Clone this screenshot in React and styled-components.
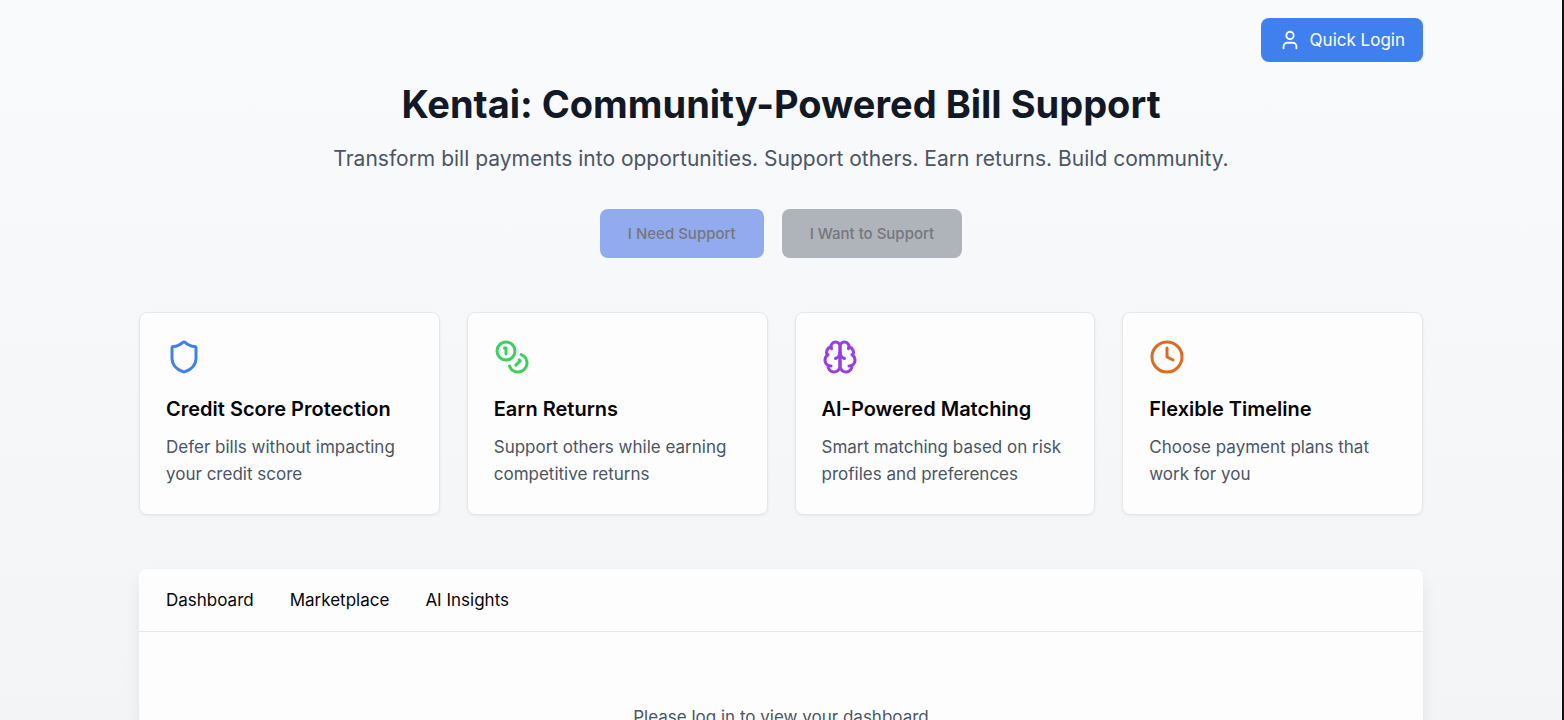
import styled, { createGlobalStyle } from "styled-components";
import { User, Shield, Coins, Clock } from "lucide-react";

const Brain = ({ size, color }) => (
    <svg width={size} height={size} viewBox="0 0 24 24" fill="none" stroke={color} strokeWidth="2" strokeLinecap="round" strokeLinejoin="round" aria-hidden="true">
        <path d="M12 5a3 3 0 1 0-5.997.125 4 4 0 0 0-2.526 5.77 4 4 0 0 0 .556 6.588A4 4 0 1 0 12 18Z" />
        <path d="M12 5a3 3 0 1 1 5.997.125 4 4 0 0 1 2.526 5.77 4 4 0 0 1-.556 6.588A4 4 0 1 1 12 18Z" />
        <path d="M15 13a4.5 4.5 0 0 1-3-4 4.5 4.5 0 0 1-3 4" />
        <path d="M17.599 6.5a3 3 0 0 0 .399-1.375" />
        <path d="M6.003 5.125A3 3 0 0 0 6.401 6.5" />
        <path d="M3.477 10.896a4 4 0 0 1 .585-.396" />
        <path d="M19.938 10.5a4 4 0 0 1 .585.396" />
        <path d="M6 18a4 4 0 0 1-1.967-.516" />
        <path d="M19.967 17.484A4 4 0 0 1 18 18" />
    </svg>
);

const features = [
    { icon: Shield, color: "#4180e6", title: "Credit Score Protection", text: "Defer bills without impacting your credit score" },
    { icon: Coins, color: "#3ecf63", title: "Earn Returns", text: "Support others while earning competitive returns" },
    { icon: Brain, color: "#9640e2", title: "AI-Powered Matching", text: "Smart matching based on risk profiles and preferences" },
    { icon: Clock, color: "#dc6b20", title: "Flexible Timeline", text: "Choose payment plans that work for you" },
];

const tabs = ["Dashboard", "Marketplace", "AI Insights"];

const App = () => {
    return (
        <Page>
            <GlobalStyle />
            <TopBar>
                <LoginButton type="button">
                    <User size={22} />
                    Quick Login
                </LoginButton>
            </TopBar>
            <Container>
                <Hero>
                    <Title>Kentai: Community-Powered Bill Support</Title>
                    <Subtitle>Transform bill payments into opportunities. Support others. Earn returns. Build community.</Subtitle>
                    <Actions>
                        <ActionButton type="button" disabled $background="#92abee">I Need Support</ActionButton>
                        <ActionButton type="button" disabled $background="#afb3ba">I Want to Support</ActionButton>
                    </Actions>
                </Hero>
                <Features>
                    {features.map(({ icon: Icon, color, title, text }) => (
                        <Card key={title}>
                            <Icon size={36} color={color} />
                            <CardTitle>{title}</CardTitle>
                            <CardText>{text}</CardText>
                        </Card>
                    ))}
                </Features>
                <Panel>
                    <Tabs>
                        {tabs.map(tab => (
                            <Tab key={tab} type="button">{tab}</Tab>
                        ))}
                    </Tabs>
                    <Message>Please log in to view your dashboard</Message>
                </Panel>
            </Container>
        </Page>
    );
}

const GlobalStyle = createGlobalStyle`
    * {
        box-sizing: border-box;
        margin: 0;
    }

    html {
        scrollbar-width: none;
    }

    body {
        background-color: #f3f4f6;
        color: #050608;
        font-family: Inter, "Liberation Sans", sans-serif;
    }

    button {
        font-family: inherit;
    }
`;

const Page = styled.div`
    min-height: 100vh;
    padding: 18px 0 0;
    background: linear-gradient(#f9fafb, #f3f4f6);
    border-right: 2px solid #111111;
`;

const TopBar = styled.header`
    display: flex;
    justify-content: flex-end;
    max-width: 1284px;
    margin: 0 auto;
`;

const LoginButton = styled.button`
    display: flex;
    align-items: center;
    gap: 9px;
    height: 44px;
    padding: 0 18px;
    border: none;
    border-radius: 8px;
    background-color: #3f80ee;
    color: #ffffff;
    font-size: 17px;
`;

const Container = styled.main`
    max-width: 1284px;
    margin: 0 auto;
`;

const Hero = styled.section`
    display: flex;
    flex-direction: column;
    align-items: center;
    padding: 18px 0 54px;
    text-align: center;
`;

const Title = styled.h1`
    font-size: 38px;
    font-weight: 700;
    line-height: 48px;
    color: #111826;
`;

const Subtitle = styled.p`
    margin-top: 16px;
    font-size: 21px;
    line-height: 30px;
    color: #4b5563;
`;

const Actions = styled.div`
    display: flex;
    gap: 18px;
    margin-top: 35px;
`;

const ActionButton = styled.button`
    height: 49px;
    padding: 0 28px;
    border: none;
    border-radius: 8px;
    background-color: ${({ $background }) => $background};
    color: #75777c;
    font-size: 15px;
    font-weight: 500;
`;

const Features = styled.section`
    display: grid;
    grid-template-columns: repeat(4, 1fr);
    gap: 27px;

    @media (max-width: 1000px) {
        grid-template-columns: repeat(2, 1fr);
    }
`;

const Card = styled.article`
    padding: 26px;
    border: 1px solid #e5e7eb;
    border-radius: 8px;
    background-color: #fdfdfd;
    box-shadow: 0 1px 3px rgba(0, 0, 0, 0.06);
`;

const CardTitle = styled.h2`
    margin-top: 14px;
    font-size: 20px;
    font-weight: 600;
    line-height: 32px;
`;

const CardText = styled.p`
    margin-top: 9px;
    font-size: 17px;
    line-height: 27px;
    color: #4b5563;
`;

const Panel = styled.section`
    margin-top: 54px;
    border-radius: 8px 8px 0 0;
    background-color: #fdfdfd;
    box-shadow: 0 10px 16px rgba(0, 0, 0, 0.08);
`;

const Tabs = styled.nav`
    display: flex;
    gap: 36px;
    padding: 0 27px;
    border-bottom: 1px solid #e5e7eb;
`;

const Tab = styled.button`
    height: 62px;
    padding: 0;
    border: none;
    background: none;
    color: #050608;
    font-size: 17px;
`;

const Message = styled.p`
    padding: 72px 27px;
    font-size: 17px;
    line-height: 27px;
    text-align: center;
    color: #4b5563;
`;

export default App
